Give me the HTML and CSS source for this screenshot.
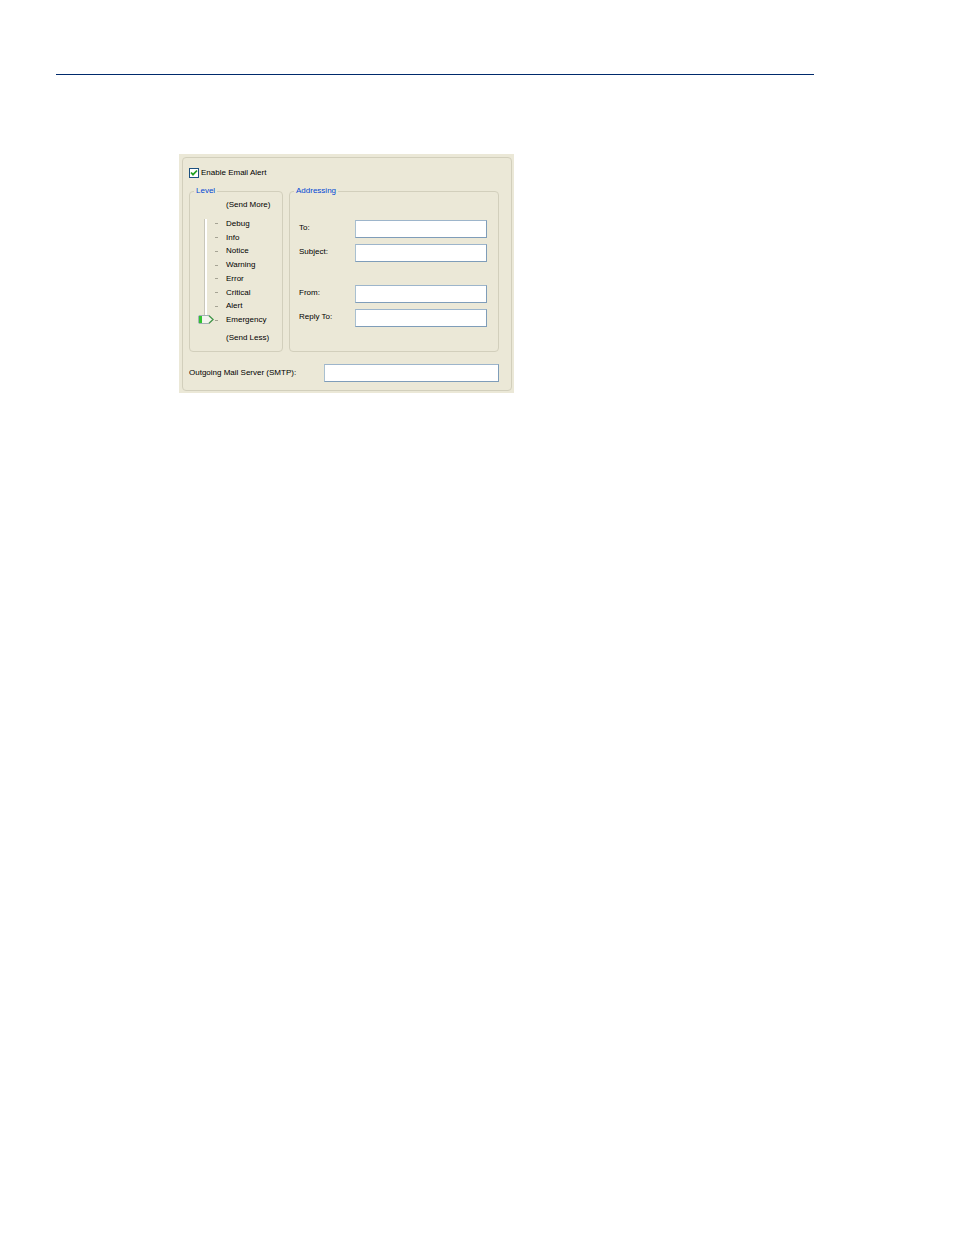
FILE: index.html
```html
<!DOCTYPE html>
<html lang="en">
<head>
<meta charset="utf-8">
<meta name="viewport" content="width=device-width, initial-scale=1">
<title>Email Alert</title>
<link rel="stylesheet" href="styles.css">
</head>
<body>
<main class="page">
  <hr class="rule">
  <form class="panel">
    <div class="group">
      <label class="enable">
        <input class="check" type="checkbox" checked>
        <span>Enable Email Alert</span>
      </label>
      <div class="columns">
        <fieldset class="box level">
          <legend>Level</legend>
          <p class="hint">(Send More)</p>
          <div class="scale">
            <input class="slider" type="range" min="0" max="7" value="7" aria-label="Level">
            <ul class="steps">
              <li>Debug</li>
              <li>Info</li>
              <li>Notice</li>
              <li>Warning</li>
              <li>Error</li>
              <li>Critical</li>
              <li>Alert</li>
              <li>Emergency</li>
            </ul>
          </div>
          <p class="hint">(Send Less)</p>
        </fieldset>
        <fieldset class="box addressing">
          <legend>Addressing</legend>
          <div class="fields">
            <label for="to">To:</label><input class="text" id="to" type="text">
            <label for="subject">Subject:</label><input class="text" id="subject" type="text">
          </div>
          <div class="fields">
            <label for="from">From:</label><input class="text" id="from" type="text">
            <label for="reply">Reply To:</label><input class="text" id="reply" type="text">
          </div>
        </fieldset>
      </div>
      <div class="server">
        <label for="smtp">Outgoing Mail Server (SMTP):</label>
        <input class="text" id="smtp" type="text">
      </div>
    </div>
  </form>
</main>
</body>
</html>
```
FILE: styles.css
```css
* { box-sizing: border-box; }

body {
  margin: 0;
  background: #fff;
  color: #000;
  font: 8px/12px "Liberation Sans", Arial, sans-serif;
}

.page { padding: 74px 140px 74px 56px; }

.rule {
  height: 1px;
  margin: 0 0 79px;
  border: 0;
  background: #002a6c;
}

.panel {
  max-width: 335px;
  margin-left: 123px;
  padding: 3px 2px 2px 3px;
  background: #ebe8d7;
}

.group {
  padding: 9px 12px 8px 6px;
  border: 1px solid #d2cfbc;
  border-radius: 4px;
}

.enable {
  display: flex;
  align-items: center;
  gap: 2px;
  width: max-content;
}

.check {
  appearance: none;
  width: 10px;
  height: 10px;
  margin: 0;
  border: 1px solid #1c5180;
  background: #fff;
}

.check:checked {
  background: #fff url("data:image/svg+xml,%3Csvg xmlns='http://www.w3.org/2000/svg' viewBox='0 0 8 8'%3E%3Cpath d='M1 3.5 3 5.7 7 1.5' fill='none' stroke='%2321a121' stroke-width='1.8'/%3E%3C/svg%3E") center / 8px 8px;
}

.columns {
  display: flex;
  gap: 6px;
  margin-top: 6px;
}

.box {
  min-width: 0;
  height: 167px;
  margin: 0;
  padding: 0;
  border: 1px solid #d2cfbc;
  border-radius: 4px;
}

.box legend {
  margin-left: 4px;
  padding: 0 2px;
  color: #0046d5;
}

.level { flex: 0 0 94px; }
.addressing { flex: 1; }

.hint {
  margin: 2px 0 0 36px;
}

.scale {
  display: flex;
  gap: 1px;
  margin: 6px 0 5px;
  padding-left: 8px;
}

.slider {
  appearance: none;
  writing-mode: vertical-lr;
  width: 16px;
  height: 105px;
  margin: 2px 0 0;
  background: none;
}

.slider::-webkit-slider-runnable-track {
  width: 16px;
  height: 100%;
  background: linear-gradient(to right, transparent 6px, #c9c7ba 6px 7px, #fff 7px 9px, transparent 9px);
}

.slider::-webkit-slider-thumb {
  appearance: none;
  width: 16px;
  height: 9px;
  background: url("data:image/svg+xml,%3Csvg xmlns='http://www.w3.org/2000/svg' viewBox='0 0 16 9'%3E%3Cpath d='M1 .5H11L15.3 4.5 11 8.5H1L.5 8V1Z' fill='%23f4f4ee' stroke='%23a3b0b4'/%3E%3Cpath d='M1 1H4V8H1Z' fill='%2332c332'/%3E%3Cpath d='M11 .8 15 4.5 11 8.2' fill='none' stroke='%23479a4b' stroke-width='1.3'/%3E%3C/svg%3E") center / 16px 9px;
}

.steps {
  display: grid;
  grid-template-rows: repeat(8, 1fr);
  align-items: center;
  height: 110px;
  margin: 0;
  padding: 0;
  list-style: none;
}

.steps li {
  display: flex;
  align-items: center;
  gap: 8px;
}

.steps li::before {
  content: "";
  width: 3px;
  height: 1px;
  background: #a5a394;
}

.fields {
  display: grid;
  grid-template-columns: 56px 1fr;
  row-gap: 6px;
  padding: 0 11px 0 9px;
}

legend + .fields { margin: 23px 0; }

.text {
  width: 100%;
  min-width: 0;
  height: 18px;
  padding: 1px 3px;
  border: 1px solid;
  border-color: #9db5cb #7f9db9 #7f9db9 #a9c0d0;
  background: #fff;
  font: inherit;
}

.fields label { padding-top: 2px; }

.server {
  display: grid;
  grid-template-columns: 135px 1fr;
  align-items: center;
  margin-top: 12px;
}
```
